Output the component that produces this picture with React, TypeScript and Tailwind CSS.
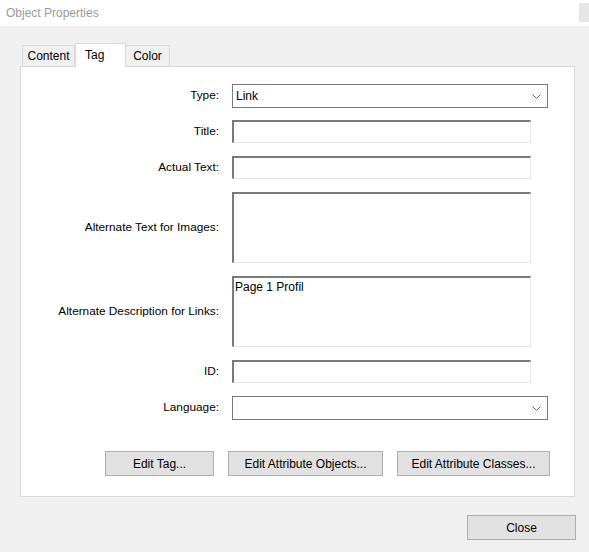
import React from "react";

const font = { fontFamily: '"Liberation Sans", Arial, sans-serif' };

function Chevron() {
  return (
    <svg width="9" height="5" viewBox="0 0 9 5" className="text-[#666666]">
      <path d="M0.5 0.5 L4.5 4.5 L8.5 0.5" fill="none" stroke="currentColor" strokeWidth="1" />
    </svg>
  );
}

function SelectBox({ value }: { value?: string }) {
  return (
    <div className="flex h-[24px] w-[316px] items-center justify-between border border-[#7a7a7a] bg-white pl-[3px] pr-[6px] text-[12px] text-black">
      <span>{value}</span>
      <Chevron />
    </div>
  );
}

function TextBox({ tall, value }: { tall?: boolean; value?: string }) {
  return (
    <div
      className={`${tall ? "h-[71px]" : "h-[23px]"} w-[299px] border-t-2 border-l-2 border-r border-b border-t-[#7a7a7a] border-l-[#7a7a7a] border-r-[#e3e3e3] border-b-[#e3e3e3] bg-white px-[1px] pt-[2px] text-[12px] leading-[15px] text-black`}
    >
      {value}
    </div>
  );
}

function Row({ label, children }: { label: string; children: React.ReactNode }) {
  return (
    <div className="flex items-center">
      <div className="w-[198px] text-right text-[11.8px] text-black">{label}</div>
      <div className="ml-[13px]">{children}</div>
    </div>
  );
}

function Button({ label, width }: { label: string; width: string }) {
  return (
    <div
      className={`${width} flex h-[25px] items-center justify-center border border-[#adadad] bg-[#e1e1e1] text-[12px] text-black`}
    >
      {label}
    </div>
  );
}

export default function App() {
  return (
    <div className="flex h-[552px] w-[589px] flex-col overflow-hidden bg-[#f0f0f0]" style={font}>
      <div className="flex h-[26px] items-start justify-between bg-white">
        <span className="pl-[6px] pt-[4px] text-[12px] text-[#9a9a9a]">Object Properties</span>
        <div className="mt-[3px] h-[19px] w-[10px] bg-[#e6e6e6]" />
      </div>

      <div className="flex flex-col pl-[20px] pt-[17px]">
        <div className="flex h-[23px] items-end pl-[2px]">
          <div className="flex h-[21px] w-[53px] items-center justify-center border border-b-0 border-[#d9d9d9] bg-[#f0f0f0] text-[12px] text-black">
            Content
          </div>
          <div className="relative z-10 -mb-px flex h-[24px] w-[51px] items-start border border-b-0 border-[#d9d9d9] bg-white pl-[9px] pt-[2px] text-[12px] text-black">
            Tag
          </div>
          <div className="flex h-[21px] w-[44px] items-center justify-center border border-b-0 border-l-0 border-[#d9d9d9] bg-[#f0f0f0] text-[12px] text-black">
            Color
          </div>
        </div>

        <div className="flex h-[431px] w-[555px] flex-col border border-[#d9d9d9] bg-white pt-[17px]">
          <div className="flex flex-col gap-[13px]">
            <div className="-mb-px">
              <Row label="Type:">
                <SelectBox value="Link" />
              </Row>
            </div>
            <Row label="Title:">
              <TextBox />
            </Row>
            <Row label="Actual Text:">
              <TextBox />
            </Row>
            <Row label="Alternate Text for Images:">
              <TextBox tall />
            </Row>
            <Row label="Alternate Description for Links:">
              <TextBox tall value="Page 1 Profil" />
            </Row>
            <Row label="ID:">
              <TextBox />
            </Row>
            <Row label="Language:">
              <SelectBox />
            </Row>
          </div>

          <div className="mt-[31px] flex gap-[14px] pl-[84px]">
            <Button label="Edit Tag..." width="w-[109px]" />
            <Button label="Edit Attribute Objects..." width="w-[155px]" />
            <Button label="Edit Attribute Classes..." width="w-[153px]" />
          </div>
        </div>
      </div>

      <div className="flex justify-end pr-[13px] pt-[18px]">
        <Button label="Close" width="w-[109px]" />
      </div>
    </div>
  );
}
